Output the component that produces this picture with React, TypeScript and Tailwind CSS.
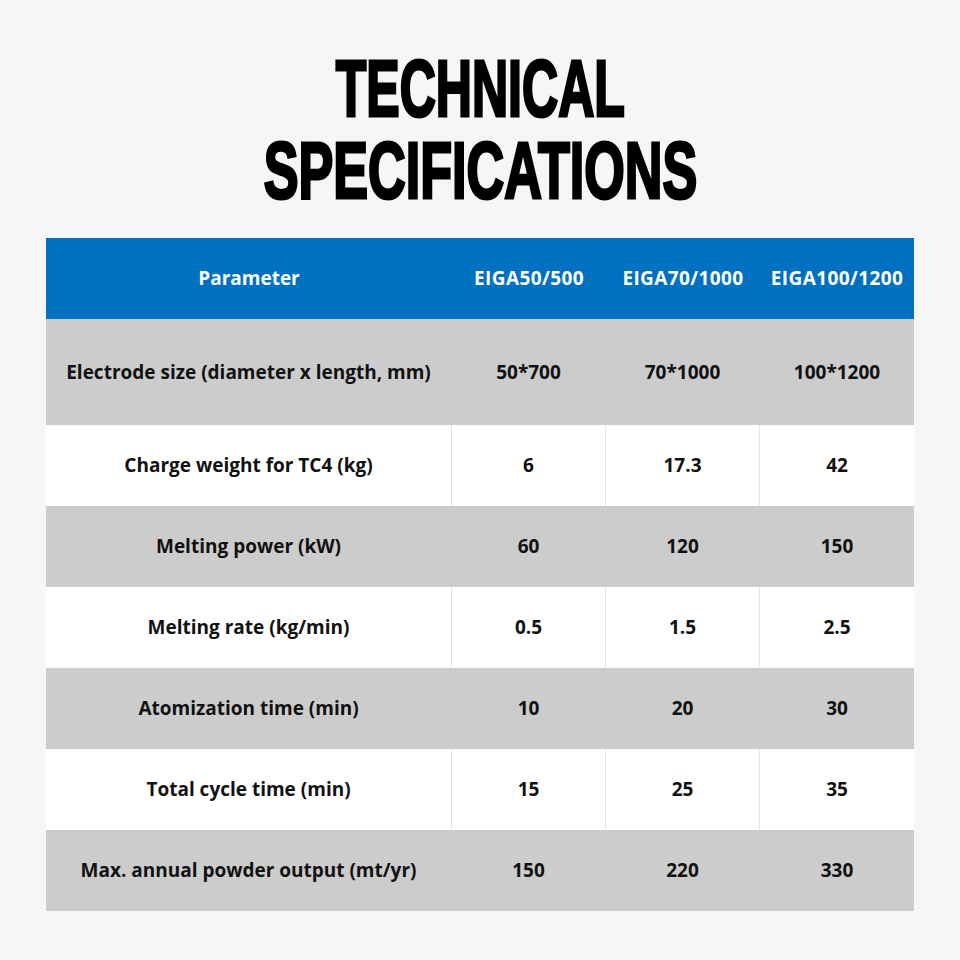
import React from 'react';

const rows = [
  { label: 'Electrode size (diameter x length, mm)', values: ['50*700', '70*1000', '100*1200'], tall: true },
  { label: 'Charge weight for TC4 (kg)', values: ['6', '17.3', '42'] },
  { label: 'Melting power (kW)', values: ['60', '120', '150'] },
  { label: 'Melting rate (kg/min)', values: ['0.5', '1.5', '2.5'] },
  { label: 'Atomization time (min)', values: ['10', '20', '30'] },
  { label: 'Total cycle time (min)', values: ['15', '25', '35'] },
  { label: 'Max. annual powder output (mt/yr)', values: ['150', '220', '330'] },
];

const models = ['EIGA50/500', 'EIGA70/1000', 'EIGA100/1200'];

const App = () => {
  return (
    <div className="w-[960px] h-[960px] bg-[#f6f6f6] font-['Open_Sans',sans-serif] overflow-hidden">
      {/* Title */}
      <div className="pt-[48px] flex flex-col items-center">
        <h1 className="font-['Liberation_Sans',sans-serif] font-bold text-[79px] leading-[82px] text-black text-center scale-x-[0.66] whitespace-nowrap [-webkit-text-stroke:3px_black]">
          <span className="inline-block scale-x-[0.96]">TECHNICAL</span>
          <br />
          SPECIFICATIONS
        </h1>
      </div>

      {/* Table */}
      <div className="mt-[26px] mx-auto w-[868px]">
        <div className="grid grid-cols-[406px_154px_154px_154px] h-[81px] bg-[#0070c0] text-white font-bold text-[19px]">
          <div className="flex items-center justify-center">Parameter</div>
          {models.map((m) => (
            <div key={m} className="flex items-center justify-center tracking-[0.4px]">{m}</div>
          ))}
        </div>
        {rows.map((row, i) => {
          const gray = i % 2 === 0;
          return (
            <div
              key={row.label}
              className={`grid grid-cols-[406px_154px_154px_154px] text-[19px] font-bold text-[#111] ${row.tall ? 'h-[106px]' : 'h-[81px]'} ${gray ? 'bg-[#cccccc]' : 'bg-white'}`}
            >
              <div className={`flex items-center justify-center border-r ${gray ? 'border-[#cccccc]' : 'border-[#e4e4e4]'}`}>{row.label}</div>
              {row.values.map((v, j) => (
                <div
                  key={j}
                  className={`flex items-center justify-center ${j < 2 ? 'border-r' : ''} ${gray ? 'border-[#cccccc]' : 'border-[#e4e4e4]'}`}
                >
                  {v}
                </div>
              ))}
            </div>
          );
        })}
      </div>
    </div>
  );
};

export default App;
